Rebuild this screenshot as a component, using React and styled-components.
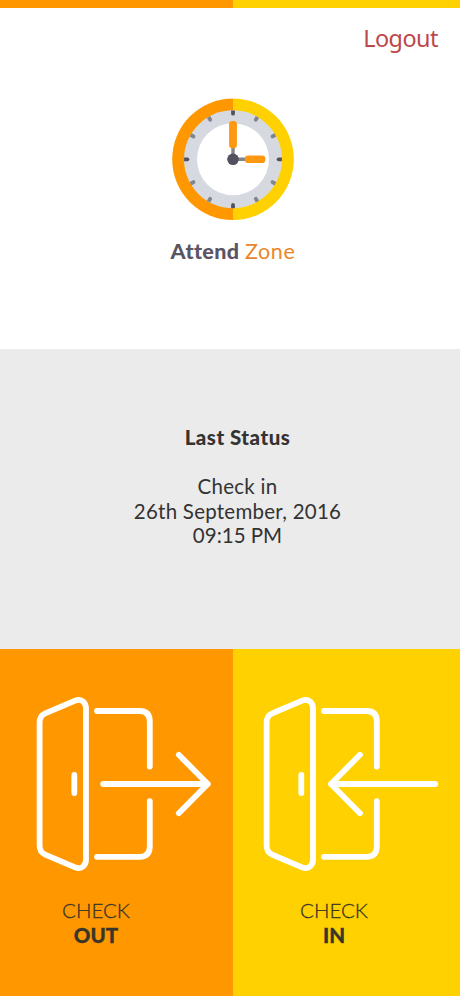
import React from "react"
import styled, { createGlobalStyle } from "styled-components"

const TICKS = [0, 30, 60, 90, 120, 150, 180, 210, 240, 270, 300, 330]

const Clock = () => (
  <ClockSvg viewBox="-61 -61 122 122">
    <path d="M0 -60.8A60.8 60.8 0 0 0 0 60.8Z" fill="#ff9800" />
    <path d="M0 -60.8A60.8 60.8 0 0 1 0 60.8Z" fill="#ffd100" />
    <circle r="49" fill="#d6dae0" />
    <circle r="36" fill="#fff" />
    {TICKS.map(angle => (
      <path
        key={angle}
        d="M-1.9 -48.9H1.9V-45.6A1.9 1.9 0 0 1 -1.9 -45.6Z"
        fill={angle % 90 === 0 ? "#54505f" : "#83858e"}
        transform={`rotate(${angle})`}
      />
    ))}
    <path d="M0 0V-14M0 0H14" stroke="#83858e" strokeWidth="3.4" />
    <rect x="-3.9" y="-38.3" width="7.8" height="27.3" rx="3.2" fill="#ff9811" />
    <rect x="11.8" y="-3.8" width="20.6" height="7.6" rx="3.4" fill="#ff9811" />
    <circle r="5.8" fill="#54505f" />
  </ClockSvg>
)

const DoorIcon = ({ arrow }) => (
  <DoorSvg viewBox="0 0 180 180">
    <path d="M11.2 19.4L41.2 6.6C47 4.2 52 8.3 52 14.2V165.8C52 171.7 47 175.8 41.2 173.4L11.2 160.6Q5.6 158 5.6 151.5V28.5Q5.6 22 11.2 19.4Z" />
    <path d="M40.3 81V99" />
    <path d="M63 17H105.5Q115.8 17 115.8 27.5V72.5" />
    <path d="M63 162.8H105.5Q115.8 162.8 115.8 152.3V107.2" />
    {arrow === "out" ? (
      <path d="M69.2 90H173.8M144.8 60.8L173.8 90L144.8 119.2" />
    ) : (
      <path d="M174.3 90H70M99 60.8L70 90L99 119.2" />
    )}
  </DoorSvg>
)

const App = () => {
  return (
    <Page>
      <GlobalStyle />
      <TopBar />
      <Header>
        <Logout>Logout</Logout>
        <Clock />
        <Brand>
          <b>Attend</b> <span>Zone</span>
        </Brand>
      </Header>
      <Status>
        <StatusTitle>Last Status</StatusTitle>
        <StatusLine $spacing="0.25px">Check in</StatusLine>
        <StatusLine $spacing="0.25px">26th September, 2016</StatusLine>
        <StatusLine>09:15 PM</StatusLine>
      </Status>
      <Actions>
        <Action $color="#ff9800" $indent="34px">
          <DoorIcon arrow="out" />
          <Label $width="192px">
            CHECK
            <b>OUT</b>
          </Label>
        </Action>
        <Action $color="#ffd100" $indent="28px">
          <DoorIcon arrow="in" />
          <Label $width="202px">
            CHECK
            <b>IN</b>
          </Label>
        </Action>
      </Actions>
    </Page>
  )
}

export default App

const GlobalStyle = createGlobalStyle`
  * {
    box-sizing: border-box;
  }

  body {
    margin: 0;
    background: #fff;
  }
`

const Page = styled.div`
  width: 460px;
  height: 996px;
  display: flex;
  flex-direction: column;
  overflow: hidden;
  font-family: Lato, "Liberation Sans", sans-serif;
  font-size: 20.5px;
  line-height: 24.5px;
  color: #333;
`

const TopBar = styled.div`
  height: 8px;
  flex-shrink: 0;
  background: linear-gradient(90deg, #ff9800 233px, #ffd100 233px);
`

const Header = styled.header`
  height: 341px;
  flex-shrink: 0;
  display: flex;
  flex-direction: column;
  align-items: center;
  padding-left: 6px;
`

const Logout = styled.button`
  align-self: flex-end;
  height: 32px;
  margin: 14px 22px 44px 0;
  padding: 0;
  border: 0;
  background: none;
  font-family: "Noto Sans", sans-serif;
  font-size: 23.4px;
  letter-spacing: -0.5px;
  line-height: 32px;
  color: #bd474b;
  cursor: pointer;
`

const ClockSvg = styled.svg`
  width: 122px;
  height: 122px;
  flex-shrink: 0;
  transform: translateY(0.3px);
`

const Brand = styled.div`
  margin-top: 19px;
  height: 25px;
  font-size: 21.5px;
  white-space: nowrap;
  color: #5a5464;

  b {
    font-weight: 900;
    letter-spacing: 0.4px;
  }

  span {
    color: #e9872a;
    letter-spacing: 0.6px;
  }
`

const Status = styled.section`
  height: 300px;
  flex-shrink: 0;
  display: flex;
  flex-direction: column;
  align-items: center;
  padding: 76px 0 0 15px;
  background: #ebebeb;
`

const StatusTitle = styled.h2`
  margin: 0 0 24.5px;
  font-size: inherit;
  font-weight: 900;
  letter-spacing: 0.5px;
`

const StatusLine = styled.div`
  letter-spacing: ${props => props.$spacing || "0"};
`

const Actions = styled.div`
  flex: 1;
  display: grid;
  grid-template-columns: 233px 227px;
`

const Action = styled.button`
  display: flex;
  flex-direction: column;
  align-items: flex-start;
  padding: 45px 0 0;
  border: 0;
  background: ${props => props.$color};
  font: inherit;
  color: #39352a;
  cursor: pointer;

  svg {
    margin-left: ${props => props.$indent};
  }
`

const DoorSvg = styled.svg`
  width: 180px;
  height: 180px;
  fill: none;
  stroke: #fff;
  stroke-width: 5.8px;
  stroke-linecap: round;
  stroke-linejoin: round;
`

const Label = styled.div`
  width: ${props => props.$width};
  margin-top: 24px;
  text-align: center;
  font-weight: 300;
  -webkit-text-stroke: 0.3px currentColor;

  b {
    display: block;
    font-weight: 900;
  }
`
